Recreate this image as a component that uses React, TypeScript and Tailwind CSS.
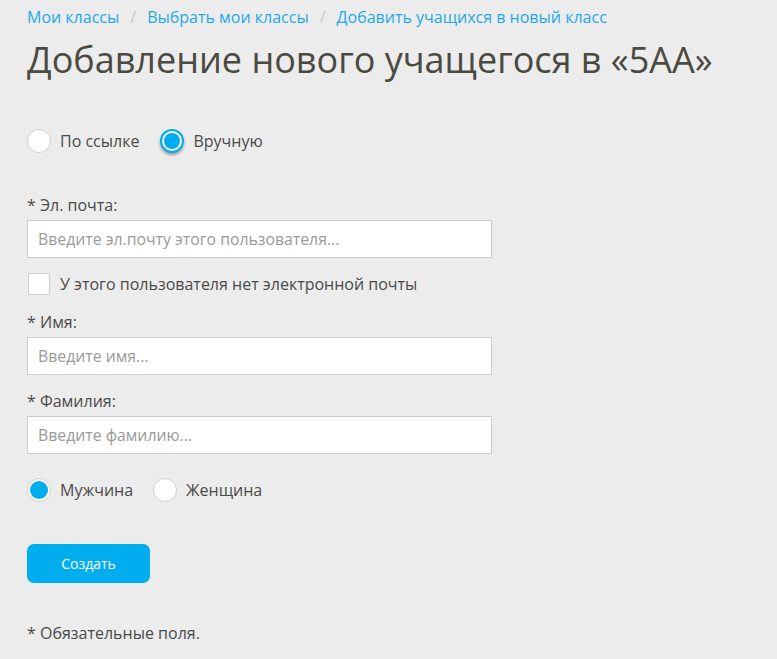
import React, { useState } from "react";

function Radio({ checked, focused, label, onClick }: { checked: boolean; focused?: boolean; label: string; onClick: () => void }) {
  return (
    <label onClick={onClick} className="flex items-center gap-[9px] cursor-pointer">
      <span
        className={
          "flex h-[24px] w-[24px] items-center justify-center rounded-full bg-white " +
          (focused ? "border-2 border-[#00aeef] shadow-[0_2px_3px_rgba(0,0,0,0.35)]" : "border border-[#cfcfcf]")
        }
      >
        {checked && <span className={focused ? "h-[16px] w-[16px] rounded-full bg-[#00aeef]" : "h-[18px] w-[18px] rounded-full bg-[#00aeef]"} />}
      </span>
      <span className="text-[16px] leading-[20px] text-[#4a4a4a]">{label}</span>
    </label>
  );
}

function Field({ label, placeholder }: { label: string; placeholder: string }) {
  return (
    <div>
      <div className="text-[16px] leading-[20px] text-[#4a4a4a]">{label}</div>
      <input
        placeholder={placeholder}
        className="mt-[5px] h-[38px] w-[465px] border border-[#cccccc] bg-white px-[10px] text-[15.8px] text-[#4a4a4a] placeholder:text-[#9a9a9a] outline-none"
      />
    </div>
  );
}

export default function App() {
  const [mode, setMode] = useState("manual");
  const [gender, setGender] = useState("m");
  const [noEmail, setNoEmail] = useState(false);

  return (
    <div className="min-h-[659px] bg-[#ececec] pl-[27px] pt-[7px] font-['Open_Sans',sans-serif]">
      <nav className="flex items-center text-[16px] leading-[20px] text-[#1fa9ea]">
        <a href="#">Мои классы</a>
        <span className="mx-[11px] text-[#c8c8c8]">/</span>
        <a href="#">Выбрать мои классы</a>
        <span className="mx-[11px] text-[#c8c8c8]">/</span>
        <a href="#">Добавить учащихся в новый класс</a>
      </nav>

      <h1 className="mt-[11px] text-[36px] leading-[44px] text-[#4a4a42]">Добавление нового учащегося в «5АА»</h1>

      <div className="mt-[46px] flex h-[26px] items-center gap-[21px]">
        <Radio checked={mode === "link"} label="По ссылке" onClick={() => setMode("link")} />
        <Radio checked={mode === "manual"} focused label="Вручную" onClick={() => setMode("manual")} />
      </div>

      <div className="mt-[41px]">
        <Field label="* Эл. почта:" placeholder="Введите эл.почту этого пользователя..." />
      </div>

      <label onClick={() => setNoEmail(!noEmail)} className="mt-[15px] flex h-[22px] cursor-pointer items-center gap-[10px] pl-[1px]">
        <span className="flex h-[22px] w-[22px] items-center justify-center border border-[#cfcfcf] bg-white text-[14px] text-[#00aeef]">
          {noEmail ? "✓" : ""}
        </span>
        <span className="text-[16px] leading-[20px] text-[#4a4a4a]">У этого пользователя нет электронной почты</span>
      </label>

      <div className="mt-[17px]">
        <Field label="* Имя:" placeholder="Введите имя..." />
      </div>

      <div className="mt-[16px]">
        <Field label="* Фамилия:" placeholder="Введите фамилию..." />
      </div>

      <div className="mt-[23px] flex h-[26px] items-center gap-[20px]">
        <Radio checked={gender === "m"} label="Мужчина" onClick={() => setGender("m")} />
        <Radio checked={gender === "f"} label="Женщина" onClick={() => setGender("f")} />
      </div>

      <button className="mt-[41px] h-[39px] w-[123px] rounded-[7px] bg-[#00aeef] text-[14px] text-white">Создать</button>

      <p className="mt-[40px] text-[16px] leading-[20px] text-[#4a4a4a]">* Обязательные поля.</p>
    </div>
  );
}
